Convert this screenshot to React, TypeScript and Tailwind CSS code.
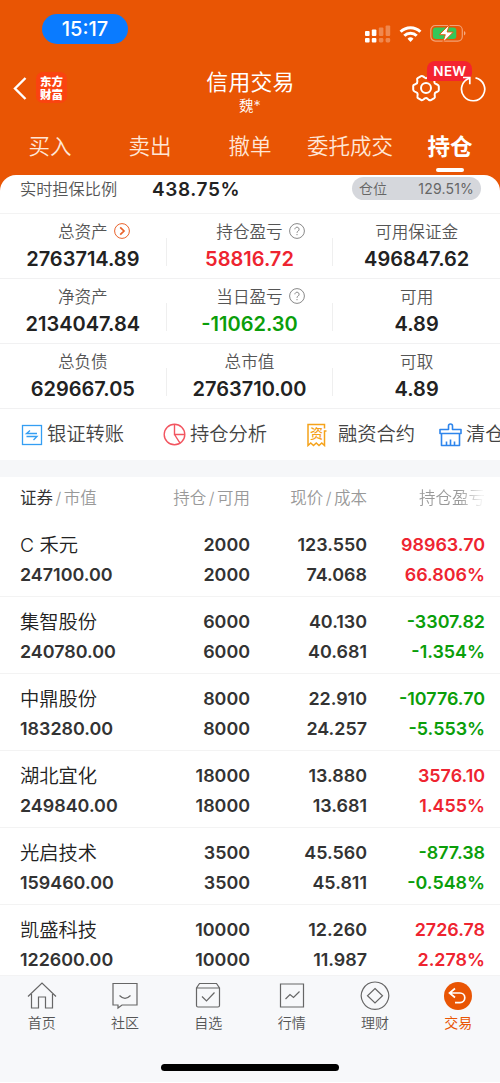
import type { ReactNode } from "react";
import clsx from "clsx";

const RED = "text-[#ee2430]";
const GREEN = "text-[#0a9e0a]";

const tabs = ["买入", "卖出", "撤单", "委托成交", "持仓"];

const summary = [
  [
    { label: "总资产", value: "2763714.89", mark: "arrow" },
    { label: "持仓盈亏", value: "58816.72", mark: "help", color: RED },
    { label: "可用保证金", value: "496847.62" },
  ],
  [
    { label: "净资产", value: "2134047.84" },
    { label: "当日盈亏", value: "-11062.30", mark: "help", color: GREEN },
    { label: "可用", value: "4.89" },
  ],
  [
    { label: "总负债", value: "629667.05" },
    { label: "总市值", value: "2763710.00" },
    { label: "可取", value: "4.89" },
  ],
];

const holdings = [
  { name: "C 禾元", market: "247100.00", qty: "2000", price: "123.550", cost: "74.068", profit: "98963.70", rate: "66.806%" },
  { name: "集智股份", market: "240780.00", qty: "6000", price: "40.130", cost: "40.681", profit: "-3307.82", rate: "-1.354%" },
  { name: "中鼎股份", market: "183280.00", qty: "8000", price: "22.910", cost: "24.257", profit: "-10776.70", rate: "-5.553%" },
  { name: "湖北宜化", market: "249840.00", qty: "18000", price: "13.880", cost: "13.681", profit: "3576.10", rate: "1.455%" },
  { name: "光启技术", market: "159460.00", qty: "3500", price: "45.560", cost: "45.811", profit: "-877.38", rate: "-0.548%" },
  { name: "凯盛科技", market: "122600.00", qty: "10000", price: "12.260", cost: "11.987", profit: "2726.78", rate: "2.278%" },
];

function StatusBar() {
  return (
    <div className="flex h-[58px] items-start justify-between pl-[42px] pr-[33px] pt-[14px]">
      <div className="flex h-[30px] w-[86px] items-center justify-center rounded-full bg-[#0a7bff] text-[20px] font-medium">
        15:17
      </div>
      <div className="flex items-center pt-[10px]">
        <svg width="26" height="18" viewBox="0 0 26 18" fill="#fff">
          <rect x="0" y="6" width="4.6" height="5" rx="1" />
          <rect x="6.8" y="4.5" width="4.6" height="6.5" rx="1" />
          <rect x="13.8" y="2.5" width="4.6" height="8.5" rx="1" opacity=".3" />
          <rect x="20.6" y="0.5" width="4.6" height="10.5" rx="1" opacity=".3" />
          <rect x="0" y="13" width="4.6" height="4.4" rx="1" />
          <rect x="6.8" y="13" width="4.6" height="4.4" rx="1" />
          <rect x="13.8" y="13" width="4.6" height="4.4" rx="1.4" opacity=".3" />
          <rect x="20.6" y="13" width="4.6" height="4.4" rx="1.4" opacity=".3" />
        </svg>
        <svg className="ml-[8px]" width="23" height="17" viewBox="0 0 23 17" fill="none" stroke="#fff" strokeWidth="3">
          <path d="M1.6 5.8a14 14 0 0 1 19.8 0" />
          <path d="M5.3 9.8a8.8 8.8 0 0 1 12.4 0" />
          <path d="M11.5 15.9l-3-3.1a4.3 4.3 0 0 1 6 0z" fill="#fff" stroke="none" />
        </svg>
        <svg className="ml-[8px]" width="37" height="20" viewBox="0 0 37 20">
          <rect x="0.8" y="1.5" width="31.5" height="15.6" rx="4.5" fill="none" stroke="#fff" strokeOpacity=".45" strokeWidth="1.2" />
          <path d="M34 7.1c2 .8 2 3.6 0 4.4z" fill="#fff" fillOpacity=".5" />
          <rect x="2.8" y="3.5" width="23.5" height="11.6" rx="3" fill="#34c759" />
          <path d="M19.5 0.500L9.300 10.700h6l-2.500 7.800 10.500-10.500h-6.200z" fill="#fff" stroke="#e95504" strokeWidth="0.9" />
        </svg>
      </div>
    </div>
  );
}

function TitleBar() {
  return (
    <div className="grid h-[66px] grid-cols-3 items-start">
      <div className="flex items-center pl-[12px] pt-[14px]">
        <svg width="16" height="24" viewBox="0 0 16 24" fill="none" stroke="#fff" strokeWidth="2.4">
          <path d="M13.5 2L3 12.5l10.5 10.5" />
        </svg>
        <div className="ml-[8px] flex h-[31px] w-[31px] items-center justify-center rounded-[7px] bg-[#fa4310]">
          <span className="w-[25px] break-all pl-px font-['Noto_Sans_CJK_SC',sans-serif] text-[11.5px] font-black leading-[13px]">东方财富</span>
        </div>
      </div>
      <div className="flex flex-col items-center pt-[10px]">
        <h1 className="pl-px text-[21.8px] font-normal leading-[28px] tracking-[0.3px]">信用交易</h1>
        <div className="text-[14.5px] font-[350] leading-[20px]">魏*</div>
      </div>
      <div className="relative flex items-center justify-end pr-[14px] pt-[16px]">
        <svg width="30" height="30" viewBox="0 0 30 30" fill="none" stroke="#fff" strokeWidth="2" strokeLinejoin="round">
          <g transform="rotate(30 15 14.1)">
            <path d="M11.2 3.8Q12 1.500 13 1.500h4q1 0 1.800 2.300l.4.900q.9 1.400 2.400.9l1.300-.2q1.700-.2 2.300.8l2 3.400q.5 1-.6 2l-.8 1.100q-1 1.400 0 2.800l.8 1.100q1.100 1 .6 2l-2 3.400q-.6 1-2.300.8l-1.300-.2q-1.500-.5-2.400.9l-.4.9Q18 26.700 17 26.700h-4q-1 0-1.800-2.300l-.4-.9q-.9-1.400-2.400-.9l-1.300.2q-1.700.2-2.300-.8l-2-3.400q-.5-1 .6-2l.8-1.100q1-1.400 0-2.800l-.8-1.100q-1.100-1-.6-2l2-3.400q.6-1 2.300-.8l1.300.2q1.500.5 2.400-.9z" />
          </g>
          <circle cx="15" cy="14.1" r="5" />
        </svg>
        <svg className="relative z-10 ml-[19px]" width="26" height="28" viewBox="0 0 26 28" fill="none" stroke="#fff" strokeWidth="1.7">
          <path d="M15.500 2.800A11.600 11.600 0 1 1 9.300 3.200" />
          <path d="M3 2.500h6.800v6.800" />
        </svg>
        <span className="absolute left-[94px] top-[3px] flex h-[20px] w-[45px] items-center rounded-[8px] rounded-bl-[2px] bg-[#f42330] pl-[6px] text-[13.5px] font-semibold tracking-[0.3px]">
          NEW
        </span>
      </div>
    </div>
  );
}

function TradeTabs() {
  return (
    <div className="grid h-[51px] grid-cols-5 items-start pt-[8px] text-[21.5px] leading-[29px]">
      {tabs.map((tab) => {
        const active = tab === "持仓";
        return (
          <div key={tab} className={clsx("flex flex-col items-center whitespace-nowrap", active ? "text-[22.5px] font-bold" : "font-[350] text-[#ffe6d6]")}>
            {tab}
            {active && <span className="mt-[7px] h-[4px] w-[28px] rounded-full bg-white" />}
          </div>
        );
      })}
    </div>
  );
}

// hangs to the right of a centred label, so it must not take up width
function Mark({ type }: { type: string }) {
  return (
    <svg
      className={clsx("absolute left-full top-[3px] ml-[6px]", type === "arrow" ? "text-[#e9622a]" : "text-[#888]")}
      width="16"
      height="16"
      viewBox="0 0 16 16"
      fill="none"
      stroke="currentColor"
    >
      <circle cx="8" cy="8" r="7.4" strokeWidth="1" />
      {type === "arrow" ? (
        <path d="M6.2 4.3L10 8l-3.8 3.7" strokeWidth="1.7" />
      ) : (
        <>
          <path d="M5.9 6.3a2.1 2.1 0 1 1 3.3 1.7c-.8.5-1.2.8-1.2 1.8" />
          <path d="M8 11v1.2" />
        </>
      )}
    </svg>
  );
}

function Summary() {
  return (
    <>
      <div className="flex h-[39px] items-start border-b border-[#f3f3f3] pl-[20px] pr-[19px]">
        <span className="w-[132px] text-[16.2px] font-[350] leading-[28px] text-[#555]">实时担保比例</span>
        <span className="text-[19px] font-semibold leading-[29px] tracking-[0.6px]">438.75%</span>
        <div className="ml-auto mt-[2px] flex h-[23px] w-[129px] items-center justify-between rounded-full bg-[#d5d7dc] px-[7px] text-[14px] text-[#666]">
          <span className="font-[350]">仓位</span>
          <span className="tracking-[0.2px]">129.51%</span>
        </div>
      </div>
      {summary.map((row, i) => (
        <div key={i} className="grid h-[65px] grid-cols-3 border-b border-[#f1f1f2]">
          {row.map((item) => (
            <div key={item.label} className="flex">
              <div className="flex flex-1 flex-col items-center pt-[6px]">
                <div className="relative whitespace-nowrap text-[16.6px] font-[350] leading-[25px] text-[#555]">
                  {item.label}
                  {item.mark && <Mark type={item.mark} />}
                </div>
                <div className={clsx("text-[20px] font-semibold leading-[28px]", item.color)}>{item.value}</div>
              </div>
              {item !== row[2] && <span className="mt-[24px] h-[28px] w-px bg-[#efefef]" />}
            </div>
          ))}
        </div>
      ))}
    </>
  );
}

function Action({ icon, children }: { icon: ReactNode; children: ReactNode }) {
  return (
    <div className="flex shrink-0 items-center whitespace-nowrap">
      {icon}
      {children}
    </div>
  );
}

function Actions() {
  return (
    <div className="flex h-[51px] overflow-hidden pl-[21px] text-[19.3px] font-[350] text-[#444]">
      <div className="flex w-[142px] shrink-0">
        <Action
          icon={
            <svg className="mr-[4px]" width="22" height="22" viewBox="0 0 22 22" fill="none" stroke="#349ef3" strokeWidth="1.3">
              <rect x="1.5" y="1.5" width="19" height="19" />
              <path d="M16 9.5H5.500l3.500-3M5.500 12.500h10.500l-3.500 3.500" />
            </svg>
          }
        >
          银证转账
        </Action>
      </div>
      <div className="flex w-[143px] shrink-0">
        <Action
          icon={
            <svg className="mr-[4px]" width="23" height="23" viewBox="0 0 23 23" fill="none" stroke="#f25560" strokeWidth="1.4">
              <circle cx="11.5" cy="11.5" r="10.3" />
              <path d="M11.5 1.2v10.3h10.3M11.5 11.5l5.5 8.7" />
            </svg>
          }
        >
          持仓分析
        </Action>
      </div>
      <div className="flex w-[133px] shrink-0">
        <Action
          icon={
            <span className="relative mr-[11px] flex h-[24px] w-[21px] shrink-0 items-center justify-center pb-[3px] text-[13px] font-medium leading-none text-[#f5a21a]">
              <svg className="absolute inset-0" width="21" height="24" viewBox="0 0 21 24" fill="none" stroke="#f5a21a" strokeWidth="1.5">
                <path d="M18.500 5.500V1.500H2v21l2.750-2.500 2.750 2.500 2.750-2.500 2.750 2.500 2.750-2.500 2.750 2.500V8h2" />
              </svg>
              资
            </span>
          }
        >
          融资合约
        </Action>
      </div>
      <Action
        icon={
          <svg className="mr-[4px]" width="23" height="24" viewBox="0 0 23 24" fill="none" stroke="#2e85ec" strokeWidth="1.6" strokeLinejoin="round">
            <path d="M9.5 6.5V3q0-2 2-2t2 2v3.500H22v4H1v-4zM2.500 10.500v12h18v-12M7.500 22.500v-4M11.500 22.500v-6M15.500 22.500v-4" />
          </svg>
        }
      >
        清仓
      </Action>
    </div>
  );
}

const COLS = "grid grid-cols-[115px_115px_117px_118px] pl-[20px] pr-[15px]";

function Slash() {
  return <span className="mx-[2.5px]">/</span>;
}

function Holdings() {
  return (
    <div className="h-[498px] overflow-hidden">
      <div className={clsx(COLS, "h-[43px] items-center text-right text-[16.5px] font-[350] text-[#999]")}>
        <span className="text-left">
          <span className="font-normal text-[#333]">证券</span>
          <Slash />
          市值
        </span>
        <span>
          持仓
          <Slash />
          可用
        </span>
        <span>
          现价
          <Slash />
          成本
        </span>
        <span className="bg-linear-to-r from-[#999] from-78% to-[#f2f2f2] to-97% bg-clip-text text-transparent">持仓盈亏</span>
      </div>
      {holdings.map((h) => (
        <div key={h.name} className={clsx(COLS, "h-[77px] border-b border-[#f3f3f3] pt-[10px] text-right text-[17.9px] font-semibold leading-[29.5px] text-[#333]")}>
          <div className="flex flex-col text-left">
            <span className="h-[29.5px] text-[19.3px] font-[350] leading-[31px] text-[#222]">{h.name}</span>
            <span>{h.market}</span>
          </div>
          <div className="flex flex-col">
            <span>{h.qty}</span>
            <span>{h.qty}</span>
          </div>
          <div className="flex flex-col">
            <span>{h.price}</span>
            <span>{h.cost}</span>
          </div>
          <div className={clsx("flex flex-col", h.profit.startsWith("-") ? GREEN : RED)}>
            <span>{h.profit}</span>
            <span>{h.rate}</span>
          </div>
        </div>
      ))}
    </div>
  );
}

const navItems = [
  { label: "首页", icon: <path d="M1 15.5L15 2l14 13.5M4.5 13v14h7v-11h7v11h7V13" /> },
  { label: "社区", icon: <path d="M3 2.5h24v21.5H12l-4 3v-3H3zM9.5 14.5q5.500 5.500 11 0" /> },
  { label: "自选", icon: <path d="M3.5 7v17.5q0 1.500 1.500 1.500h20q1.500 0 1.500-1.500V7l-3-4.500h-17zM3.500 7h23M9 15.500l4.500 4.500 8-8.500" /> },
  { label: "行情", icon: <path d="M3.5 3h23v23h-23zM8.500 18l4.500-4.500 3.500 3 6-6" /> },
  { label: "理财", icon: <path d="M15 1a13.7 13.7 0 1 0 .01 0zM15 7.500l7.500 7.200-7.500 7.200-7.500-7.200z" /> },
];

function BottomNav() {
  return (
    <nav className="flex h-[107px] flex-col items-center justify-between border-t border-[#f3f3f4] bg-[#f7f8fa] pb-[11px]">
      <div className="grid w-full grid-cols-6 pt-[5px] text-[14px] font-[350] text-[#555]">
        {navItems.map((n) => (
          <div key={n.label} className="flex flex-col items-center">
            <svg width="30" height="30" viewBox="0 0 30 30" fill="none" stroke="#666" strokeWidth="1.2">
              {n.icon}
            </svg>
            <span className="mt-[2px] leading-[20px]">{n.label}</span>
          </div>
        ))}
        <div className="flex flex-col items-center font-normal text-[#e95504]">
          <svg width="30" height="30" viewBox="0 0 30 30" fill="none" stroke="#fff" strokeWidth="1.7">
            <circle cx="15" cy="15" r="14" fill="#e95504" stroke="none" />
            <path d="M12 7.5L6.500 12l5.500 4.500M6.500 12H17a4.800 4.800 0 0 1 0 9.600h-5" />
          </svg>
          <span className="mt-[2px] leading-[20px]">交易</span>
        </div>
      </div>
      <div className="h-[7px] w-[178px] rounded-full bg-black" />
    </nav>
  );
}

export default function App() {
  return (
    <div className="h-[1083px] w-[500px] overflow-hidden bg-white font-['Inter','Noto_Sans_CJK_SC',sans-serif] text-[#222]">
      <div className="bg-[#e95504]">
        <header className="text-white">
          <StatusBar />
          <TitleBar />
          <TradeTabs />
        </header>
        <div className="rounded-t-[16px] bg-white">
          <Summary />
        </div>
      </div>
      <Actions />
      <div className="h-[17px] bg-[#f6f7f9]" />
      <Holdings />
      <BottomNav />
    </div>
  );
}
